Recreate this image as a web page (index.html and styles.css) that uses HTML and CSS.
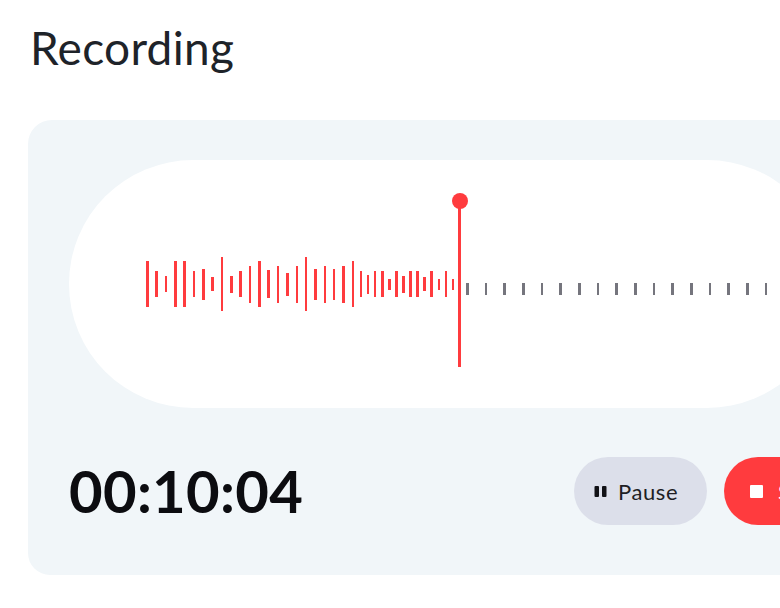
FILE: index.html
```html
<!DOCTYPE html>
<html lang="en">
<head>
<meta charset="utf-8">
<title>Recording</title>
<link rel="stylesheet" href="styles.css">
</head>
<body>
<main class="page">
  <h1 class="title">Recording</h1>
  <section class="card">
    <div class="wave">
      <div class="bars bars-wide">
        <span class="bar" style="height:46px"></span>
        <span class="bar" style="height:26px"></span>
        <span class="bar" style="height:16px"></span>
        <span class="bar" style="height:46px"></span>
        <span class="bar" style="height:46px"></span>
        <span class="bar" style="height:26px"></span>
        <span class="bar" style="height:31px"></span>
        <span class="bar" style="height:14px"></span>
        <span class="bar" style="height:54px"></span>
        <span class="bar" style="height:17px"></span>
        <span class="bar" style="height:26px"></span>
        <span class="bar" style="height:37px"></span>
        <span class="bar" style="height:46px"></span>
        <span class="bar" style="height:28px"></span>
        <span class="bar" style="height:37px"></span>
        <span class="bar" style="height:23px"></span>
        <span class="bar" style="height:37px"></span>
        <span class="bar" style="height:54px"></span>
        <span class="bar" style="height:31px"></span>
        <span class="bar" style="height:37px"></span>
        <span class="bar" style="height:31px"></span>
        <span class="bar" style="height:37px"></span>
        <span class="bar" style="height:46px"></span>
      </div>
      <div class="bars bars-dense">
        <span class="bar" style="height:26px"></span>
        <span class="bar" style="height:19px"></span>
        <span class="bar" style="height:26px"></span>
        <span class="bar" style="height:26px"></span>
        <span class="bar" style="height:11px"></span>
        <span class="bar" style="height:26px"></span>
        <span class="bar" style="height:17px"></span>
        <span class="bar" style="height:26px"></span>
        <span class="bar" style="height:26px"></span>
        <span class="bar" style="height:14px"></span>
        <span class="bar" style="height:26px"></span>
        <span class="bar" style="height:11px"></span>
        <span class="bar" style="height:26px"></span>
        <span class="bar" style="height:11px"></span>
      </div>
      <div class="playhead"></div>
      <div class="ticks">
        <span class="tick"></span><span class="tick"></span><span class="tick"></span><span class="tick"></span>
        <span class="tick"></span><span class="tick"></span><span class="tick"></span><span class="tick"></span>
        <span class="tick"></span><span class="tick"></span><span class="tick"></span><span class="tick"></span>
        <span class="tick"></span><span class="tick"></span><span class="tick"></span><span class="tick"></span>
        <span class="tick"></span><span class="tick"></span><span class="tick"></span><span class="tick"></span>
      </div>
    </div>
    <div class="controls">
      <div class="timer">00:10:04</div>
      <button class="btn btn-pause" type="button">
        <svg class="icon-pause" width="13" height="11" viewBox="0 0 13 11" aria-hidden="true">
          <rect x="0.5" y="0" width="4.5" height="11" rx="1" fill="#111116"/>
          <rect x="8" y="0" width="4.5" height="11" rx="1" fill="#111116"/>
        </svg>
        <span>Pause</span>
      </button>
      <button class="btn btn-stop" type="button">
        <span class="icon-stop"></span>
        <span>Stop</span>
      </button>
    </div>
  </section>
</main>
</body>
</html>
```

FILE: styles.css
```css
html, body {
  margin: 0;
  padding: 0;
  overflow: hidden;
  background: #ffffff;
}

.page {
  width: 900px;
  font-family: "Lato", "Noto Sans", sans-serif;
}

.title {
  margin: 0;
  padding: 21px 0 0 30px;
  font-size: 46px;
  line-height: 54px;
  font-weight: 400;
  letter-spacing: 0.3px;
  color: #1e2329;
}

.card {
  margin: 45px 0 0 28px;
  width: 844px;
  box-sizing: border-box;
  padding: 40px 41px 50px 41px;
  background: #f1f6f9;
  border-radius: 24px 0 0 22px;
}

.wave {
  height: 248px;
  border-radius: 124px;
  background: #ffffff;
  display: flex;
  align-items: center;
  padding-left: 77px;
  overflow: hidden;
}

.bars {
  display: flex;
  align-items: center;
}

.bars-wide {
  gap: 6.85px;
}

.bars-dense {
  gap: 4.57px;
  margin-left: 5.8px;
}

.bar {
  display: block;
  width: 2.5px;
  background: #ff3b3e;
  flex: none;
}

.playhead {
  position: relative;
  flex: none;
  width: 3px;
  height: 166px;
  margin-left: 4px;
  background: #ff3b3e;
}

.playhead::before {
  content: "";
  position: absolute;
  left: -6.5px;
  top: -8px;
  width: 16px;
  height: 16px;
  border-radius: 50%;
  background: #ff3b3e;
}

.ticks {
  display: flex;
  gap: 16.17px;
  margin: 10px 0 0 5px;
}

.tick {
  display: block;
  flex: none;
  width: 2.5px;
  height: 11.5px;
  background: #75757d;
}

.controls {
  margin-top: 49px;
  height: 68px;
  display: flex;
  align-items: center;
}

.timer {
  flex: 1;
  font-size: 58px;
  line-height: 58px;
  font-weight: 700;
  color: #0c0c10;
  letter-spacing: 0.3px;
}

.btn {
  height: 68px;
  border: 0;
  border-radius: 34px;
  display: flex;
  align-items: center;
  font-family: "Lato", "Noto Sans", sans-serif;
  font-size: 22px;
  letter-spacing: 0.6px;
  cursor: pointer;
  flex: none;
  box-sizing: border-box;
}

.btn-pause {
  width: 133px;
  padding: 0 0 0 20px;
  gap: 11px;
  background: #dcdfea;
  color: #1e1e24;
}

.btn-stop {
  width: 107px;
  margin-left: 17px;
  padding: 0 0 0 26px;
  gap: 15px;
  background: #ff3b3e;
  color: #ffffff;
}

.icon-pause {
  display: block;
  flex: none;
}

.icon-stop {
  display: block;
  flex: none;
  width: 13px;
  height: 13px;
  border-radius: 1px;
  background: #ffffff;
}
```
